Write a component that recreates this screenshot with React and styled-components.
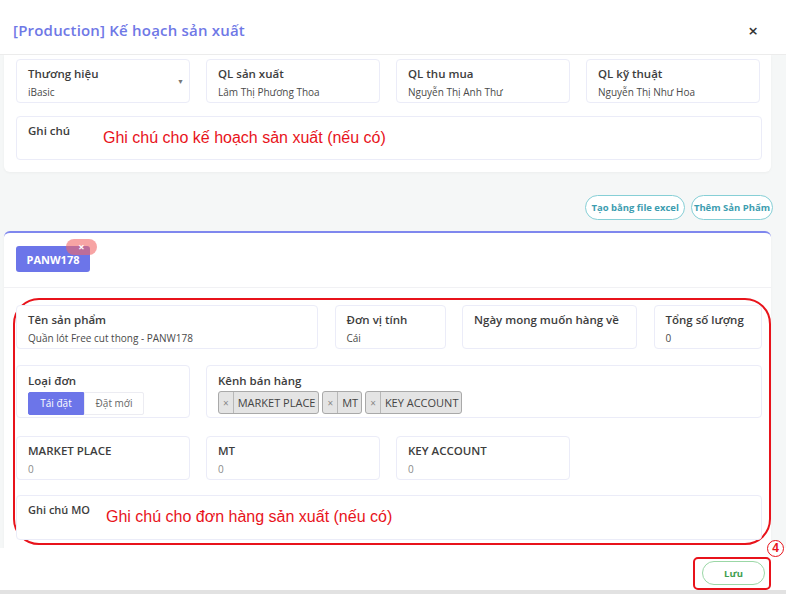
import styled, { createGlobalStyle } from 'styled-components'

const GlobalStyle = createGlobalStyle`
  * { box-sizing: border-box; }
  html, body { margin: 0; padding: 0; }
  body {
    font-family: "Open Sans", "Noto Sans", sans-serif;
    color: #3b3b3b;
    background: #ffffff;
  }
`

const Page = styled.div`
  display: flex;
  flex-direction: column;
  width: 786px;
  height: 594px;
  overflow: hidden;
`

const Header = styled.div`
  display: flex;
  align-items: center;
  justify-content: space-between;
  height: 55px;
  padding: 6px 28px 0 13px;
  background: #fff;
  border-bottom: 1px solid #ececec;
  flex-shrink: 0;
`

const Title = styled.h2`
  margin: 0;
  font-size: 15px;
  font-weight: 600;
  letter-spacing: 0.2px;
  color: #6f78e6;
`

const Close = styled.span`
  font-size: 17px;
  font-weight: 600;
  color: #333;
  line-height: 1;
`

const Body = styled.div`
  flex: 1;
  overflow: hidden;
  background: #f5f7f7;
  padding: 0 15px 0 4px;
`

const Card = styled.div`
  background: #fff;
  border-radius: ${(p) => (p.$top ? '6px' : '0 0 6px 6px')};
  border-top: ${(p) => (p.$top ? '2px solid #7f87ee' : 'none')};
  box-shadow: 0 1px 3px rgba(0, 0, 0, 0.04);
`

const PlanCard = styled(Card)`
  display: flex;
  flex-direction: column;
  gap: 13px;
  padding: 4px 9px 12px 12px;
`

const Row = styled.div`
  display: flex;
  gap: ${(p) => p.$gap || 16}px;
`

const Field = styled.div`
  position: relative;
  width: ${(p) => (p.$w ? `${p.$w}px` : 'auto')};
  flex: ${(p) => (p.$w ? '0 0 auto' : '1 1 auto')};
  min-width: 0;
  height: ${(p) => p.$h || 44}px;
  padding: 5px 10px 0 11px;
  border: 1px solid #ebecf8;
  border-radius: 4px;
  background: #fff;
`

const Label = styled.div`
  font-size: 11.5px;
  font-weight: 600;
  color: #3d3d3d;
  line-height: 18px;
  white-space: nowrap;
`

const Value = styled.div`
  margin-top: 2px;
  font-size: 10px;
  color: ${(p) => (p.$muted ? '#8a8a8a' : '#4a4a4a')};
  line-height: 15px;
`

const Caret = styled.span`
  position: absolute;
  right: 5px;
  top: 17px;
  font-size: 7px;
  color: #777;
`

const Annotation = styled.div`
  position: absolute;
  left: ${(p) => p.$left}px;
  top: ${(p) => p.$top}px;
  font-family: "Liberation Sans", Arial, sans-serif;
  font-size: 16px;
  color: #e8131b;
  white-space: nowrap;
`

const Toolbar = styled.div`
  display: flex;
  justify-content: flex-end;
  gap: 6px;
  margin: 23px -2px 11px 0;
`

const PillButton = styled.button`
  height: 25px;
  padding: 0 ${(p) => p.$pad || 5}px;
  border: 1.5px solid #86cfd6;
  border-radius: 13px;
  background: #fff;
  font-family: inherit;
  font-size: 9.5px;
  font-weight: 700;
  color: #3d9db0;
`

const ProductCard = styled(Card)`
  padding: 11px 9px 0 12px;
  height: 400px;
`

const TagBar = styled.div`
  padding-bottom: 15px;
  margin: 0 -9px 0 -12px;
  padding-left: 12px;
  border-bottom: 1px solid #f1f1f4;
`

const ProductTag = styled.div`
  position: relative;
  display: inline-flex;
  align-items: center;
  justify-content: center;
  width: 74px;
  height: 26px;
  margin-top: 2px;
  background: #6c75e9;
  border-radius: 3px;
  font-size: 11px;
  font-weight: 700;
  color: #fff;
`

const RemoveBadge = styled.span`
  position: absolute;
  left: 50px;
  top: -7px;
  width: 31px;
  height: 16px;
  border-radius: 8px;
  background: rgba(242, 104, 104, 0.6);
  color: #fff;
  font-size: 11px;
  font-weight: 700;
  line-height: 15px;
  text-align: center;
`

const Product = styled.div`
  position: relative;
  display: flex;
  flex-direction: column;
  padding-top: 17px;
`

const RedFrame = styled.div`
  position: absolute;
  left: -3px;
  top: 10px;
  width: 758px;
  height: 247px;
  border: 2px solid #e8131b;
  border-radius: 26px;
  pointer-events: none;
`

const Segmented = styled.div`
  display: inline-flex;
  margin-top: 1px;
`

const Segment = styled.span`
  display: inline-flex;
  align-items: center;
  justify-content: center;
  width: ${(p) => p.$w}px;
  height: 23px;
  font-size: 10px;
  color: ${(p) => (p.$active ? '#fff' : '#666')};
  background: ${(p) => (p.$active ? '#6c75e9' : '#fff')};
  border: 1px solid ${(p) => (p.$active ? '#6c75e9' : '#ececf2')};
  border-radius: ${(p) => (p.$active ? '2px 0 0 2px' : '0 2px 2px 0')};
`

const Chips = styled.div`
  display: flex;
  gap: 3px;
  margin-top: 1px;
`

const Chip = styled.span`
  display: inline-flex;
  align-items: stretch;
  height: 23px;
  border: 1px solid #a9a9a9;
  border-radius: 3px;
  background: #e4e4e4;
  font-size: 11px;
  color: #444;
`

const ChipX = styled.span`
  display: flex;
  align-items: center;
  padding: 0 4px;
  border-right: 1px solid #b8b8b8;
  font-size: 10px;
  color: #888;
`

const ChipText = styled.span`
  display: flex;
  align-items: center;
  padding: 0 3px 0 4px;
`

const Footer = styled.div`
  position: relative;
  display: flex;
  align-items: flex-start;
  justify-content: flex-end;
  height: 46px;
  padding: 13px 21px 0 0;
  background: #fff;
  border-bottom: 4px solid #e2e2e2;
  flex-shrink: 0;
`

const SaveButton = styled.button`
  width: 63px;
  height: 24px;
  border: 1.5px solid #9bd7a6;
  border-radius: 12px;
  background: #fff;
  font-family: inherit;
  font-size: 9.5px;
  font-weight: 700;
  color: #3f9e50;
`

const SaveFrame = styled.div`
  position: absolute;
  left: 693px;
  top: 9px;
  width: 78px;
  height: 33px;
  border: 2px solid #e8131b;
  border-radius: 5px;
  pointer-events: none;
`

const StepMark = styled.span`
  position: absolute;
  left: 767px;
  top: -8px;
  width: 17px;
  height: 17px;
  border: 1.5px solid #e8131b;
  border-radius: 50%;
  background: #fff;
  color: #e8131b;
  font-family: "Liberation Sans", Arial, sans-serif;
  font-size: 12px;
  font-weight: 700;
  line-height: 14px;
  text-align: center;
`

const managers = [
  { label: 'QL sản xuất', value: 'Lâm Thị Phương Thoa' },
  { label: 'QL thu mua', value: 'Nguyễn Thị Anh Thư' },
  { label: 'QL kỹ thuật', value: 'Nguyễn Thị Như Hoa' },
]

const channels = ['MARKET PLACE', 'MT', 'KEY ACCOUNT']

export default function App() {
  return (
    <Page>
      <GlobalStyle />
      <Header>
        <Title>[Production] Kế hoạch sản xuất</Title>
        <Close>×</Close>
      </Header>

      <Body>
        <PlanCard>
          <Row $gap={16}>
            <Field $w={174}>
              <Label>Thương hiệu</Label>
              <Value>iBasic</Value>
              <Caret>▼</Caret>
            </Field>
            {managers.map((m) => (
              <Field key={m.label} $w={174}>
                <Label>{m.label}</Label>
                <Value>{m.value}</Value>
              </Field>
            ))}
          </Row>
          <Field $h={44}>
            <Label>Ghi chú</Label>
            <Annotation $left={86} $top={12}>Ghi chú cho kế hoạch sản xuất (nếu có)</Annotation>
          </Field>
        </PlanCard>

        <Toolbar>
          <PillButton $pad={5}>Tạo bằng file excel</PillButton>
          <PillButton $pad={2}>Thêm Sản Phẩm</PillButton>
        </Toolbar>

        <ProductCard $top>
          <TagBar>
            <ProductTag>
              PANW178
              <RemoveBadge>×</RemoveBadge>
            </ProductTag>
          </TagBar>

          <Product>
            <RedFrame />
            <Row $gap={16.5}>
              <Field $w={302}>
                <Label>Tên sản phẩm</Label>
                <Value>Quần lót Free cut thong - PANW178</Value>
              </Field>
              <Field $w={111}>
                <Label>Đơn vị tính</Label>
                <Value>Cái</Value>
              </Field>
              <Field $w={175}>
                <Label>Ngày mong muốn hàng về</Label>
              </Field>
              <Field>
                <Label>Tổng số lượng</Label>
                <Value>0</Value>
              </Field>
            </Row>

            <Row $gap={16} style={{ marginTop: 16 }}>
              <Field $w={174} $h={53}>
                <Label style={{ marginTop: 1 }}>Loại đơn</Label>
                <Segmented>
                  <Segment $active $w={56}>Tái đặt</Segment>
                  <Segment $w={60}>Đặt mới</Segment>
                </Segmented>
              </Field>
              <Field $h={53}>
                <Label style={{ marginTop: 1 }}>Kênh bán hàng</Label>
                <Chips>
                  {channels.map((c) => (
                    <Chip key={c}>
                      <ChipX>×</ChipX>
                      <ChipText>{c}</ChipText>
                    </Chip>
                  ))}
                </Chips>
              </Field>
            </Row>

            <Row $gap={16} style={{ marginTop: 18 }}>
              {channels.map((c) => (
                <Field key={c} $w={174}>
                  <Label>{c}</Label>
                  <Value $muted>0</Value>
                </Field>
              ))}
            </Row>

            <Field $h={45} style={{ marginTop: 15 }}>
              <Label style={{ fontSize: 11 }}>Ghi chú MO</Label>
              <Annotation $left={89} $top={12}>Ghi chú cho đơn hàng sản xuất (nếu có)</Annotation>
            </Field>
          </Product>
        </ProductCard>
      </Body>

      <Footer>
        <SaveButton>Lưu</SaveButton>
        <SaveFrame />
        <StepMark>4</StepMark>
      </Footer>
    </Page>
  )
}
